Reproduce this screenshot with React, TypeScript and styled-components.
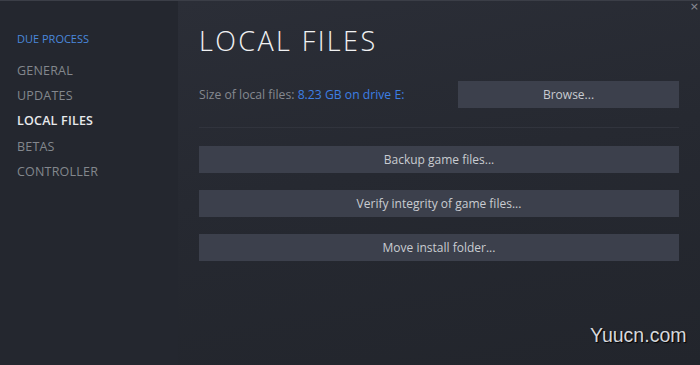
import React from "react";
import styled, { createGlobalStyle } from "styled-components";

const Global = createGlobalStyle`
  html, body { margin: 0; padding: 0; background: #23262e; }
  body { font-family: "Open Sans", "Noto Sans", "Liberation Sans", sans-serif; }
  #root { width: 700px; height: 365px; }
`;

const Window = styled.div`
  position: relative;
  width: 700px;
  height: 365px;
  display: flex;
  border-top: 1px solid #3b3e47;
  box-sizing: border-box;
  overflow: hidden;
`;

const Sidebar = styled.nav`
  width: 178px;
  flex-shrink: 0;
  background: #24272f;
  padding: 31px 0 0 17px;
  box-sizing: border-box;
  display: flex;
  flex-direction: column;
`;

const GameName = styled.div`
  color: #4a87dd;
  font-size: 11px;
  line-height: 14px;
  margin-bottom: 12px;
`;

const NavItem = styled.div<{ $active?: boolean }>`
  color: ${(p) => (p.$active ? "#e8eaec" : "#83878d")};
  font-size: 12.5px;
  font-weight: ${(p) => (p.$active ? 600 : 400)};
  line-height: 25.2px;
  letter-spacing: 0.2px;
`;

const Main = styled.main`
  flex: 1;
  background: linear-gradient(170deg, #2b2e37 0%, #262931 45%, #22252c 100%);
  padding: 22px 21px 0 21px;
  box-sizing: border-box;
  display: flex;
  flex-direction: column;
`;

const Title = styled.h1`
  margin: 0;
  font-family: "Open Sans", "Noto Sans", sans-serif;
  font-weight: 300;
  font-size: 27px;
  line-height: 36px;
  letter-spacing: 2.4px;
  color: #f1f2f3;
`;

const SizeRow = styled.div`
  display: flex;
  align-items: center;
  justify-content: space-between;
  margin-top: 22px;
  padding-bottom: 19px;
  border-bottom: 1px solid #31343d;
`;

const SizeText = styled.div`
  color: #858990;
  font-size: 12.2px;
`;

const Link = styled.span`
  color: #3d7fe4;
`;

const Button = styled.div<{ $width?: number }>`
  height: 27px;
  width: ${(p) => (p.$width ? `${p.$width}px` : "100%")};
  background: #3c404c;
  color: #c9ccd1;
  font-size: 12px;
  display: flex;
  align-items: center;
  justify-content: center;
  box-sizing: border-box;
`;

const ButtonList = styled.div`
  display: flex;
  flex-direction: column;
  gap: 17px;
  margin-top: 18px;
`;

const Close = styled.div`
  position: absolute;
  top: 0;
  right: 1px;
  color: #8a8d94;
  font-size: 11px;
  line-height: 12px;
  font-family: "DejaVu Sans", sans-serif;
`;

const Watermark = styled.div`
  position: absolute;
  left: 590px;
  top: 323px;
  font-family: "Liberation Sans", Arial, sans-serif;
  font-size: 19.5px;
  color: #d6d8dc;
  text-shadow: 1px 1px 1px #000;
`;

export default function App() {
  return (
    <>
      <Global />
      <Window>
        <Sidebar>
          <GameName>DUE PROCESS</GameName>
          <NavItem>GENERAL</NavItem>
          <NavItem>UPDATES</NavItem>
          <NavItem $active>LOCAL FILES</NavItem>
          <NavItem>BETAS</NavItem>
          <NavItem>CONTROLLER</NavItem>
        </Sidebar>
        <Main>
          <Title>LOCAL FILES</Title>
          <SizeRow>
            <SizeText>
              Size of local files: <Link>8.23 GB on drive E:</Link>
            </SizeText>
            <Button $width={221}>Browse...</Button>
          </SizeRow>
          <ButtonList>
            <Button>Backup game files...</Button>
            <Button>Verify integrity of game files...</Button>
            <Button>Move install folder...</Button>
          </ButtonList>
        </Main>
        <Close>×</Close>
        <Watermark>Yuucn.com</Watermark>
      </Window>
    </>
  );
}
